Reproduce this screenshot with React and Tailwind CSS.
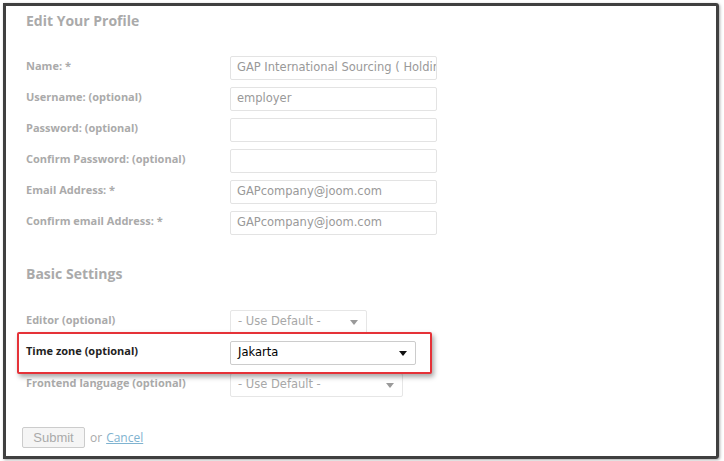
import React from "react";

const labelCls = "w-[204px] shrink-0 text-[11px] font-bold text-[#aaaaaa] pt-[2px]";
const inputCls =
  "h-[24px] border border-[#e3e3e3] rounded-[2px] px-[6px] text-[11.5px] text-[#999999] flex items-center overflow-hidden whitespace-nowrap";

const Arrow = ({ dark }) => (
  <svg width="8" height="5" viewBox="0 0 8 5" className="shrink-0">
    <path d="M0 0h8L4 5z" fill={dark ? "#111111" : "#9a9a9a"} />
  </svg>
);

const Row = ({ label, value, width = "w-[207px]" }) => (
  <div className="flex items-start h-[24px]">
    <div className={labelCls}>{label}</div>
    <div className={`${inputCls} ${width}`} style={{ fontFamily: "'DejaVu Sans', sans-serif" }}>
      {value}
    </div>
  </div>
);

const Select = ({ label, value, width, dark }) => (
  <div className="flex items-start h-[24px]">
    <div className={labelCls}>{label}</div>
    <div
      className={`h-[24px] border ${dark ? "border-[#cccccc] text-black" : "border-[#e6e6e6] text-[#a8a8a8]"} rounded-[2px] pl-[7px] pr-[8px] text-[11.5px] flex items-center justify-between ${width}`}
      style={{ fontFamily: "'DejaVu Sans', sans-serif" }}
    >
      <span>{value}</span>
      <Arrow dark={dark} />
    </div>
  </div>
);

export default function App() {
  return (
    <div className="w-[724px] h-[461px] bg-white p-[3px] pr-[5px] pb-[2px]" style={{ fontFamily: "'Open Sans', sans-serif" }}>
      <div className="h-full border-[3px] border-[#404040] rounded-tr-[3px] rounded-br-[3px] shadow-[1px_1px_3px_rgba(0,0,0,0.35)] pl-[20px] pt-[5px] flex flex-col">
        <h1 className="text-[14px] font-bold text-[#aaaaaa] leading-[20px]">Edit Your Profile</h1>

        <div className="mt-[25px] flex flex-col gap-[7px]">
          <Row label="Name: *" value="GAP International Sourcing ( Holdin" />
          <Row label="Username: (optional)" value="employer" />
          <Row label="Password: (optional)" value="" />
          <Row label="Confirm Password: (optional)" value="" />
          <Row label="Email Address: *" value="GAPcompany@joom.com" />
          <Row label="Confirm email Address: *" value="GAPcompany@joom.com" />
        </div>

        <h2 className="mt-[29px] text-[14px] font-bold text-[#aaaaaa] leading-[20px]">Basic Settings</h2>

        <div className="mt-[26px] flex flex-col">
          <Select label="Editor (optional)" value="- Use Default -" width="w-[137px]" />
          <div className="relative z-10 -ml-[9px] mt-[-2px] w-[415px] h-[42px] border-2 border-[#e53238] rounded-[2px] bg-white shadow-[2px_3px_5px_rgba(0,0,0,0.35)] pl-[7px] pt-[7px]">
            <div className="flex items-start h-[24px]">
              <div className="w-[204px] shrink-0 text-[11px] font-bold text-[#222222] pt-[2px]">Time zone (optional)</div>
              <div
                className="h-[24px] w-[186px] border border-[#cccccc] rounded-[2px] pl-[7px] pr-[8px] text-[11.5px] text-black flex items-center justify-between"
                style={{ fontFamily: "'DejaVu Sans', sans-serif" }}
              >
                <span>Jakarta</span>
                <Arrow dark />
              </div>
            </div>
          </div>
          <div className="-mt-[1px]">
            <Select label="Frontend language (optional)" value="- Use Default -" width="w-[173px]" />
          </div>
        </div>

        <div className="mt-[30px] flex items-center gap-[5px] -ml-[4px]">
          <button className="w-[63px] h-[21px] border border-[#cccccc] rounded-[2px] bg-[#f5f5f5] text-[13px] text-[#aaaaaa]" style={{ fontFamily: "'Liberation Sans', sans-serif" }}>
            Submit
          </button>
          <span className="text-[12px] text-[#aaaaaa]">or</span>
          <a className="text-[12px] text-[#7fb3d0] underline -ml-[1px]">Cancel</a>
        </div>
      </div>
    </div>
  );
}
